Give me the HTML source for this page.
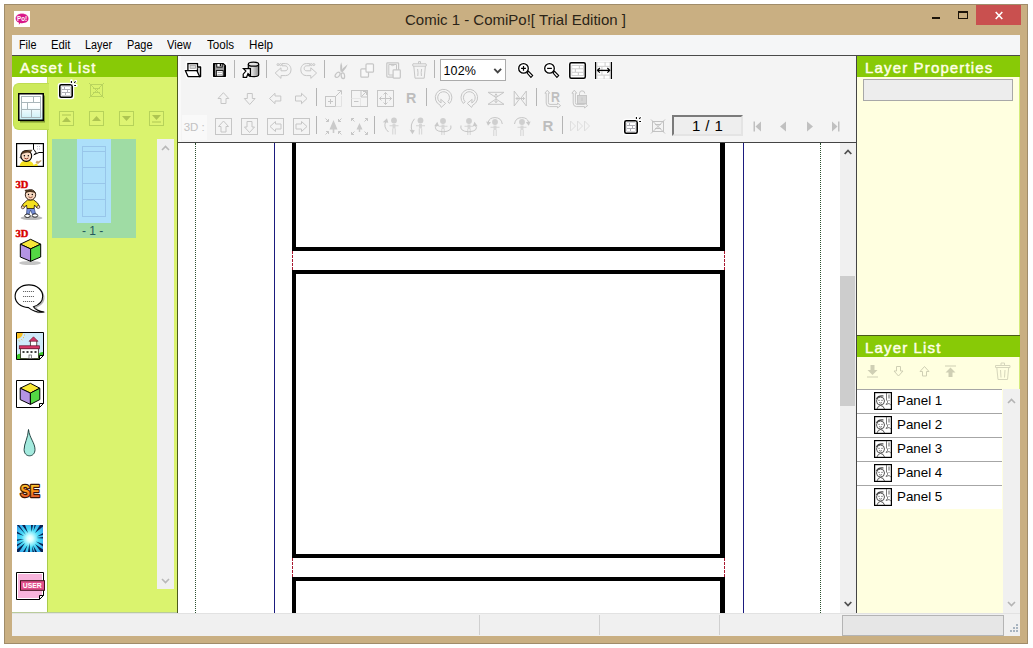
<!DOCTYPE html>
<html lang="en">
<head>
<meta charset="utf-8">
<title>Comic 1 - ComiPo![ Trial Edition ]</title>
<style>
html,body{margin:0;padding:0;background:#fff;}
body{width:1033px;height:648px;overflow:hidden;position:relative;font-family:"Liberation Sans",sans-serif;}
.a{position:absolute;}
.t{position:absolute;white-space:nowrap;line-height:1;transform-origin:0 0;}
svg{position:absolute;overflow:visible;}
#win{left:4px;top:4px;width:1024px;height:640px;background:#c9af82;box-shadow:inset 0 0 0 1px #a08c6a;}
#menubar{left:12px;top:35px;width:1008px;height:20px;background:#f5f6f7;}
.mi{font-size:12px;top:39px;color:#000;}
#topline{left:12px;top:55px;width:1008px;height:1px;background:#4a4a4a;}
.hdr{background:#88ca06;color:#fff;}
.hdrt{font-weight:normal;font-size:15px;color:#ffffe8;-webkit-text-stroke:0.45px #ffffe8;letter-spacing:1.15px;}
#left{left:12px;top:56px;width:165px;height:557px;background:#daf36e;}
#leftcol{left:12px;top:77px;width:35px;height:536px;background:#fff;}
#toolbar{left:178px;top:56px;width:678px;height:86px;background:#f4f4f4;}
#canvas{left:178px;top:143px;width:678px;height:470px;background:#fff;overflow:hidden;}
#right{left:857px;top:56px;width:163px;height:557px;background:#ffffe0;}
#status{left:12px;top:613px;width:1008px;height:23px;background:#f0f0f0;}
.vsep{width:1px;background:#b4b4b4;}
.lay{font-size:13.33px;color:#000;}
.dis{stroke:#c6c6c6;fill:none;stroke-width:1;}
</style>
</head>
<body>
<div id="win" class="a"></div>

<!-- title bar -->
<div class="a" style="left:14px;top:11px;width:16px;height:16px;background:#fffffb;"></div>
<svg style="left:14px;top:11px;" width="16" height="16" viewBox="0 0 16 16">
 <defs><radialGradient id="gpo" cx="0.5" cy="0.5" r="0.6"><stop offset="0.7" stop-color="#d81888"/><stop offset="1" stop-color="#f080c0"/></radialGradient></defs>
 <path d="M8 2.600 C12 2.600 14.600 4.800 14.600 7.600 C14.600 10.500 12 12.300 8 12.300 C7.300 12.300 6.800 12.200 6.300 12.100 L4.800 14 L5 11.700 C2.800 11 1.500 9.500 1.500 7.600 C1.500 4.800 4 2.600 8 2.600 Z" fill="url(#gpo)"/>
 <text x="3" y="10.200" font-family="Liberation Sans,sans-serif" font-weight="bold" font-size="7.500" fill="#fff" textLength="10" lengthAdjust="spacingAndGlyphs">Po!</text>
</svg>

<div class="t" id="title" style="left:405px;top:12px;font-size:15px;color:#2b2417;">Comic 1 - ComiPo![ Trial Edition ]</div>
<div class="a" style="left:932px;top:17px;width:8px;height:2px;background:#1c140a;"></div>
<div class="a" style="left:958px;top:11px;width:8px;height:5px;border:1px solid #1c140a;border-top-width:2px;"></div>
<div class="a" style="left:976px;top:5px;width:45px;height:20px;background:#c9504f;"></div>
<svg style="left:995px;top:12px;" width="8" height="7" viewBox="0 0 8 7"><path d="M0.7 0 L7.3 7 M7.3 0 L0.7 7" stroke="#fff" stroke-width="1.6" fill="none"/></svg>

<!-- menu bar -->
<div id="menubar" class="a"></div>
<div class="t mi" style="left:19.3px;transform:scaleX(0.9);">File</div>
<div class="t mi" style="left:51.2px;transform:scaleX(0.94);">Edit</div>
<div class="t mi" style="left:85.4px;transform:scaleX(0.9);">Layer</div>
<div class="t mi" style="left:127.2px;transform:scaleX(0.91);">Page</div>
<div class="t mi" style="left:167.3px;transform:scaleX(0.93);">View</div>
<div class="t mi" style="left:206.6px;transform:scaleX(0.97);">Tools</div>
<div class="t mi" style="left:249.3px;transform:scaleX(0.97);">Help</div>
<div id="topline" class="a"></div>

<!-- LEFT PANEL -->
<div id="left" class="a"></div>
<div class="a hdr" style="left:12px;top:56px;width:165px;height:21px;"></div>
<div class="t hdrt" id="h_asset" style="left:20px;top:60px;">Asset List</div>
<div id="leftcol" class="a"></div>

<div class="a" style="left:47px;top:77px;width:1px;height:6px;background:#c4e05e;"></div>
<div class="a" style="left:47px;top:130px;width:1px;height:483px;background:#a9cb4c;"></div>
<div class="a" style="left:13px;top:83px;width:35px;height:45px;background:#cdea5c;border:1px solid #bfdc52;border-right:0;border-radius:6px 0 0 6px;"></div>
<!-- thumbnail list -->
<div class="a" style="left:52px;top:139px;width:84px;height:99px;background:#9fdca4;"></div>
<div class="a" style="left:77px;top:139px;width:34px;height:84px;background:#ade0fa;"></div>
<div class="t" id="pg1" style="left:82px;top:225px;font-size:12px;color:#24595c;">- 1 -</div>
<div class="a" style="left:157px;top:139px;width:17px;height:450px;background:#f0f0f0;"></div>
<svg style="left:0;top:0;" width="1033" height="648" viewBox="0 0 1033 648">
 <!-- thumb frames -->
 <g fill="none" stroke="#98c6ea" stroke-width="1">
  <rect x="82.5" y="146.5" width="23" height="5"/>
  <rect x="82.5" y="151.5" width="23" height="16"/>
  <rect x="82.5" y="167.5" width="23" height="16"/>
  <rect x="82.5" y="183.5" width="23" height="16"/>
  <rect x="82.5" y="199.5" width="23" height="17"/>
 </g>
 <!-- list scrollbar arrows -->
 <path d="M162 150 L165.5 146.5 L169 150" stroke="#b8b8b8" stroke-width="1.6" fill="none"/>
 <path d="M162 579 L165.5 582.5 L169 579" stroke="#b8b8b8" stroke-width="1.6" fill="none"/>
 <!-- new page icon -->
 <g id="newpg">
  <rect x="57.800" y="82.800" width="16.400" height="16.400" rx="2.500" fill="#fff"/>
  <rect x="59.800" y="84.800" width="12.400" height="12.400" rx="1.500" fill="#fff" stroke="#000" stroke-width="1.600"/>
  <rect x="61.500" y="86.500" width="9" height="9" fill="#b0b0b8"/>
  <g fill="#fff"><rect x="62" y="87" width="2" height="2"/><rect x="65" y="87" width="5" height="2"/><rect x="62" y="90" width="5" height="2"/><rect x="68" y="90" width="2" height="2"/><rect x="62" y="93" width="3" height="2"/><rect x="66" y="93" width="4" height="2"/></g>
  <path d="M71.400 83 V80.600 M74 83 L75.800 81.200 M74 85.500 H76.300" stroke="#fff" stroke-width="2.800" stroke-linecap="round"/>
  <path d="M71.400 83 V81 M74.200 82.800 L75.600 81.400 M74.200 85.500 H76" stroke="#000" stroke-width="1.100"/>
 </g>
 <!-- delete page icon (disabled) -->
 <g stroke="#b9d45e" stroke-width="1" fill="none">
  <rect x="90.5" y="84.5" width="12" height="12"/>
  <path d="M89 83 L104 98 M104 83 L89 98"/>
  <path d="M93 88.5 H100 M93 92.5 H100"/>
 </g>
 <!-- arrow buttons -->
 <g stroke="#b6d25a" stroke-width="1" fill="#def472">
  <rect x="59.5" y="111.500" width="14" height="14"/>
  <rect x="89.5" y="111.500" width="14" height="14"/>
  <rect x="119.5" y="111.500" width="14" height="14"/>
  <rect x="149.5" y="111.500" width="14" height="14"/>
 </g>
 <g fill="#aec552">
  <path d="M62 122 L66.500 117 L71 122 Z"/><rect x="62" y="114.500" width="9" height="1"/>
  <path d="M92 121 L96.500 116 L101 121 Z"/>
  <path d="M122 116 L126.500 121 L131 116 Z"/>
  <path d="M152 115 L156.500 120 L161 115 Z"/><rect x="152" y="121.500" width="9" height="1"/>
 </g>
</svg>

<svg style="left:0;top:0;" width="1033" height="648" viewBox="0 0 1033 648">
 <defs>
  <linearGradient id="gcy" x1="0" y1="0" x2="0" y2="1"><stop offset="0.45" stop-color="#fff"/><stop offset="1" stop-color="#c4eef6"/></linearGradient>
  <linearGradient id="gse" x1="0" y1="0" x2="0" y2="1"><stop offset="0" stop-color="#ffe040"/><stop offset="0.5" stop-color="#ff9a18"/><stop offset="1" stop-color="#e04838"/></linearGradient>
  <radialGradient id="gbu" cx="0.5" cy="0.5" r="0.75"><stop offset="0" stop-color="#fff"/><stop offset="0.15" stop-color="#d8ffff"/><stop offset="0.45" stop-color="#48dcf8"/><stop offset="1" stop-color="#2a8ee8"/></radialGradient>
  <clipPath id="cbu"><rect x="17" y="525" width="26" height="27"/></clipPath>
 </defs>
 <!-- tab icon: panel layout -->
 <rect x="20" y="95.500" width="25" height="27" fill="#7d962e"/>
 <rect x="18.750" y="93.750" width="24.500" height="26.500" fill="url(#gcy)" stroke="#000" stroke-width="1.500"/>
 <g stroke="#a9b6ba" stroke-width="1" fill="none">
  <rect x="21.500" y="96.500" width="19" height="21"/>
  <path d="M21.500 102.500 H40.500 M21.500 109.500 H40.500 M33.500 96.500 V102.500 M27.500 102.500 V109.500 M31.500 109.500 V117.500"/>
 </g>
 <!-- character frame icon -->
 <rect x="16.600" y="143.600" width="26.800" height="22.800" fill="#fff" stroke="#000" stroke-width="1.200"/>
 <path d="M19.500 166 Q20.500 161.500 24 161 L29 161 Q33 161.500 34 166 Z" fill="#f4e020"/>
 <path d="M33 166 Q35 163 37 163.500 L38 166 Z" fill="#f4e020"/>
 <path d="M35.500 162.500 L37 160.500 L38 161.500 L41 160 L41.500 161 L38 164 Z" fill="#c8a070"/>
 <circle cx="26.300" cy="156" r="5.400" fill="#fadcc4" stroke="#000" stroke-width="1.100"/>
 <path d="M21.300 154.300 Q22.300 150.800 26.500 150.500 Q29.500 150 32.200 150.200 Q30.800 151.200 30.300 152.600 Q27 151.600 24 153 Q22.500 153.600 21.300 154.300 Z" fill="#5a3c20" stroke="#2a1808" stroke-width="0.500"/>
 <circle cx="24.400" cy="155.700" r="0.750" fill="#000"/><circle cx="28.300" cy="155.700" r="0.750" fill="#000"/>
 <path d="M24.300 158 Q26.300 159.800 28.400 158" stroke="#802010" stroke-width="0.900" fill="none"/>
 <path d="M20.600 156.500 q-0.800 0.800 0 1.800" stroke="#000" stroke-width="0.800" fill="none"/>
 <path d="M33.500 144 V149.500 Q35.500 150.500 35.300 152 L36.300 152.600 L33.800 154.800 L39 152.500 H43.400" stroke="#000" stroke-width="1" fill="#fff"/>
 <path d="M37.500 146 V147 M39.500 146 V147 M37.500 148.500 V149.500 M39.500 148.500 V149.500" stroke="#b8b8c8" stroke-width="0.900"/>
 <!-- 3D character -->
 <text x="15.500" y="187.800" font-family="Liberation Serif,serif" font-weight="bold" font-size="10.500" fill="#d80000" stroke="#d80000" stroke-width="0.400">3D</text>
 <ellipse cx="31.500" cy="218" rx="11" ry="2" fill="#b8b8b8"/>
 <path d="M27 208 L26.500 214 L29 214.500 L30.500 210 L32.500 214.500 L35.500 213.500 L34 207.500 Z" fill="#7890d8" stroke="#203060" stroke-width="0.600"/>
 <ellipse cx="27.500" cy="215.800" rx="2.800" ry="1.700" fill="#fff" stroke="#000" stroke-width="0.800"/>
 <ellipse cx="35" cy="215.500" rx="2.800" ry="1.700" fill="#fff" stroke="#000" stroke-width="0.800"/>
 <path d="M27.500 200 L23 204 L21.500 207 L24 208 L26.500 205 L27 208.500 L34 208.500 L34.500 205 L37 208 L39.500 206.500 L37.500 203 L33.500 199.800 Z" fill="#f4e020" stroke="#201008" stroke-width="0.800"/>
 <circle cx="22.800" cy="207.300" r="1.500" fill="#f8d8c0" stroke="#201008" stroke-width="0.600"/>
 <circle cx="38.300" cy="207" r="1.500" fill="#f8d8c0" stroke="#201008" stroke-width="0.600"/>
 <circle cx="30.500" cy="194.800" r="5.200" fill="#f8d8c0" stroke="#201008" stroke-width="0.900"/>
 <path d="M24.500 190 Q27 188.800 30 190 Q34 189.500 36 193.500 Q33 191.500 29 192 Q27 192 25.500 193.500 Q26 191 24.500 190 Z" fill="#4a3420"/>
 <circle cx="28.500" cy="194.500" r="0.700" fill="#000"/><circle cx="32.300" cy="194.500" r="0.700" fill="#000"/>
 <path d="M28.500 196.800 Q30.500 198.500 32.500 196.800" stroke="#702010" stroke-width="0.800" fill="none"/>
 <!-- 3D cube -->
 <text x="15.500" y="236.800" font-family="Liberation Serif,serif" font-weight="bold" font-size="10.500" fill="#d80000" stroke="#d80000" stroke-width="0.400">3D</text>
 <ellipse cx="30" cy="263" rx="11" ry="2" fill="#c4c4c4"/>
 <g stroke="#000" stroke-width="1" stroke-linejoin="round">
  <path d="M30.600 239.300 L40.700 244.200 L30.600 248.900 L20.300 244.200 Z" fill="#f8e838"/>
  <path d="M20.300 244.200 L30.600 248.900 V261.300 L20.300 257 Z" fill="#b494e4"/>
  <path d="M40.700 244.200 L30.600 248.900 V261.300 L40.700 257 Z" fill="#54d844"/>
 </g>
 <!-- speech bubble -->
 <path d="M38 287.500 C43 290.500 45.300 295 44.300 300 C43.500 303.500 40.500 306 36.500 307.800 C38.500 310.500 42 312.300 46 312.800 L38 313.300 C35 312.500 33 311 31.500 309 L34 307 C39 305 42.500 301.500 42.700 296.300 C42.700 292.500 41 289.500 38 287.500 Z" fill="#a8a8a8" opacity="0.850"/>
 <path d="M28.900 284.900 C37 284.900 42.700 290 42.700 296.300 C42.700 301 39 305 33.500 306.800 C35.500 310 39 311.500 44.300 312 C37 312.800 32 310.500 28.500 307.600 C20.500 307.300 15.100 302.500 15.100 296.300 C15.100 290 20.800 284.900 28.900 284.900 Z" fill="#fff" stroke="#000" stroke-width="1.100"/>
 <path d="M23 291.500 h11 M23 296.500 h11 M23 301.500 h12" stroke="#555" stroke-width="0.900" stroke-dasharray="1.200 0.800"/>
 <!-- background picture -->
 <path d="M16.500 332.500 H43.500 V355.500 L39.500 359.500 H16.500 Z" fill="#cfeafa" stroke="#000" stroke-width="1"/>
 <path d="M17 333 H22.800 A5.800 5.800 0 0 1 17 338.800 Z" fill="#f8c020"/>
 <path d="M24 335 l0.800 0 M23.200 337.500 l0.800 0.300 M21.500 339.500 l0.700 0.500 M19 340.500 l0.500 0.800" stroke="#e8b020" stroke-width="1"/>
 <path d="M17 359 V355 Q20 352.500 23 355.500 Q25.500 356 27 359 Z" fill="#3cc82c"/>
 <path d="M34 359 Q35 355 38 354.500 Q40 351.500 43 352 V355.500 L39.500 359 Z" fill="#3cc82c"/>
 <rect x="30.300" y="340.500" width="6.500" height="6" fill="#fff" stroke="#201008" stroke-width="0.700"/>
 <path d="M29 341.300 L33.500 336.800 L38 341.300 Z" fill="#d03868" stroke="#601028" stroke-width="0.600"/>
 <rect x="20.500" y="348.500" width="18" height="10" fill="#fff" stroke="#201008" stroke-width="0.700"/>
 <rect x="19.300" y="345.800" width="20.200" height="3" fill="#d83868" stroke="#601028" stroke-width="0.700"/>
 <path d="M22.500 352 h2 M26.500 352 h2 M30.500 352 h2 M34.500 352 h2" stroke="#404040" stroke-width="1.800"/>
 <rect x="29" y="355" width="2.500" height="3.500" fill="#fff" stroke="#404040" stroke-width="0.600"/>
 <path d="M39.500 359.500 V355.500 H43.500 Z" fill="#fff" stroke="#000" stroke-width="1" stroke-linejoin="round"/>
 <!-- cube paper -->
 <path d="M16.500 380.500 H43.500 V403.500 L39.500 407.500 H16.500 Z" fill="#fff" stroke="#000" stroke-width="1"/>
 <path d="M39.500 407.500 V403.500 H43.500 Z" fill="#fff" stroke="#000" stroke-width="1" stroke-linejoin="round"/>
 <g stroke="#000" stroke-width="1" stroke-linejoin="round">
  <path d="M30.400 383.300 L39.800 388.200 L30.400 393.100 L20.200 388.200 Z" fill="#f8e838"/>
  <path d="M20.200 388.200 L30.400 393.100 V404.400 L20.200 399.600 Z" fill="#b494e4"/>
  <path d="M39.800 388.200 L30.400 393.100 V404.400 L39.800 399.600 Z" fill="#54d844"/>
 </g>
 <!-- water drop -->
 <path d="M28.500 429.500 C29.500 438 35 443 35 449.500 C35 453.500 32.500 455.800 29.500 455.800 C26.500 455.800 24.100 453.500 24.100 449.500 C24.100 443.500 28 438 28.500 429.500 Z" fill="#a4eade" stroke="#143434" stroke-width="0.900"/>
 <!-- SE -->
 <text x="20.200" y="496.600" font-family="Liberation Sans,sans-serif" font-weight="bold" font-size="16.300" textLength="19.600" lengthAdjust="spacingAndGlyphs" fill="url(#gse)" stroke="#3c1404" stroke-width="2.400" paint-order="stroke" stroke-linejoin="round">SE</text>
 <!-- burst -->
 <rect x="17" y="525" width="26" height="27" fill="url(#gbu)"/>
 <g clip-path="url(#cbu)" fill="#082050">
  <path d="M17 525 L19 525 L26 535 Z"/><path d="M22 525 L25 525 L28 533 Z"/><path d="M31 525 L33 525 L31.500 532 Z"/><path d="M34.500 525 L36 525 L33.500 531 Z"/><path d="M40 525 L43 525 L43 526.500 L35 533 Z"/>
  <path d="M43 533 L43 535 L37 536.500 Z"/><path d="M43 537 L43 538.500 L36.500 538 Z"/><path d="M43 544 L43 546.500 L36 541.500 Z"/><path d="M43 549.500 L43 552 L41 552 L35 544 Z"/>
  <path d="M35 552 L37 552 L33 545 Z"/><path d="M32.500 552 L34 552 L32 546 Z"/><path d="M28 552 L30 552 L29.500 543 Z"/><path d="M23 552 L25 552 L27.500 545 Z"/><path d="M17 552 L17 549.500 L25 543 L19 552 Z"/>
  <path d="M17 544.500 L17 546.500 L24 541 Z"/><path d="M17 539.500 L17 541 L24 539 Z"/><path d="M17 531.500 L17 533.500 L24 536 Z"/>
 </g>
 <!-- USER -->
 <path d="M16.500 572.500 H43.500 V595.500 L39.500 599.500 H16.500 Z" fill="#fff" stroke="#000" stroke-width="1"/>
 <path d="M18 574 H42 V595 L39 598 H18 Z" fill="#f8b4dc"/>
 <path d="M39.500 599.500 V595.500 H43.500 Z" fill="#fff" stroke="#000" stroke-width="1" stroke-linejoin="round"/>
 <rect x="20.500" y="580.700" width="24" height="9.600" fill="#e0508c" stroke="#40101c" stroke-width="1"/>
 <text x="22.800" y="588.300" font-family="Liberation Sans,sans-serif" font-weight="bold" font-size="7" textLength="19" lengthAdjust="spacingAndGlyphs" fill="#fff">USER</text>
</svg>



<div class="a" style="left:12px;top:612px;width:165px;height:1px;background:#b9cc9a;"></div>
<!-- TOOLBAR -->
<div id="toolbar" class="a"></div>

<div class="a vsep" style="left:234px;top:60px;height:18px;"></div>
<div class="a vsep" style="left:266px;top:60px;height:18px;"></div>
<div class="a vsep" style="left:324px;top:60px;height:18px;"></div>
<div class="a vsep" style="left:434px;top:60px;height:18px;"></div>
<div class="a vsep" style="left:316px;top:88px;height:18px;"></div>
<div class="a vsep" style="left:426px;top:88px;height:18px;"></div>
<div class="a vsep" style="left:536px;top:88px;height:18px;"></div>
<div class="a vsep" style="left:316px;top:116px;height:18px;"></div>
<div class="a vsep" style="left:374px;top:116px;height:18px;"></div>
<div class="a vsep" style="left:562px;top:116px;height:18px;"></div>
<!-- zoom combo -->
<div class="a" style="left:440px;top:59px;width:64px;height:20px;background:#fff;border:1px solid #ababab;"></div>
<div class="t" id="zoomtxt" style="left:443.5px;top:64.8px;font-size:12.5px;color:#000;letter-spacing:0.15px;">102%</div>
<!-- 3D label -->
<div class="a" style="left:178px;top:56px;width:3px;height:86px;background:#f9f9f9;"></div>
<div class="a" style="left:182px;top:115px;width:25px;height:25px;background:#f9f9f9;"></div>
<div class="t" id="lbl3d" style="left:183.7px;top:122px;font-size:11.5px;color:#c2c2c2;">3D :</div>
<!-- page box -->
<div class="a" style="left:672px;top:115px;width:67px;height:17px;background:#eeeeee;border:2px solid;border-color:#7a7a7a #e4e4e4 #e4e4e4 #7a7a7a;"></div>
<div class="t" id="pgtxt" style="left:692px;top:118px;font-size:15px;color:#000;letter-spacing:0.4px;">1 / 1</div>
<div class="t" style="left:405.5px;top:90.3px;font-size:15px;font-weight:bold;color:#bdbdbd;transform:scaleX(0.95);">R</div>
<div class="t" style="left:542.4px;top:118.4px;font-size:15px;font-weight:bold;color:#bdbdbd;">R</div>
<svg style="left:0;top:0;" width="1033" height="648" viewBox="0 0 1033 648">
 <defs>
  <linearGradient id="gcyl" x1="0" y1="0" x2="1" y2="0"><stop offset="0" stop-color="#b8b8b8"/><stop offset="0.4" stop-color="#dcdcdc"/><stop offset="1" stop-color="#8c8c8c"/></linearGradient>
  <pattern id="brick" x="0" y="0" width="8" height="8" patternUnits="userSpaceOnUse"><rect width="8" height="8" fill="#d9d9d9"/><rect x="0.5" y="0.500" width="4" height="3" fill="#fff"/><rect x="5.500" y="0.500" width="2.500" height="3" fill="#fff"/><rect x="0" y="4.500" width="2" height="3" fill="#fff"/><rect x="3" y="4.500" width="4.500" height="3" fill="#fff"/></pattern>
 </defs>
 <!-- ROW 1 -->
 <g id="ic_open">
  <path d="M186.300 62 H198.600 V66 H201.500 V77.800 H187 L184.200 70 H186.300 Z" fill="#fff" stroke="#fff" stroke-width="1.500" stroke-linejoin="round"/>
  <rect x="187.900" y="63.600" width="9.600" height="8" fill="#fff" stroke="#000" stroke-width="1.300"/>
  <rect x="190" y="65.300" width="5.600" height="3" fill="#d8d8d8" stroke="#999" stroke-width="0.700"/>
  <path d="M197.500 67 H200.600 V76.500 H199" fill="#d0d0d0" stroke="#000" stroke-width="1.300" stroke-linejoin="round"/>
  <path d="M185.300 70.600 H196.800 L199.600 76.600 H188 Z" fill="#fff" stroke="#000" stroke-width="1.300" stroke-linejoin="round"/>
 </g>
 <g id="ic_save">
  <rect x="212" y="62" width="15" height="16" fill="#fff"/>
  <path d="M213.600 63.600 H223.300 L225.400 65.700 V76.300 H213.600 Z" fill="#9c9c9c" stroke="#000" stroke-width="1.300" stroke-linejoin="round"/>
  <rect x="213.600" y="64" width="1.300" height="12" fill="#000"/><rect x="224.100" y="66" width="1.300" height="10" fill="#000"/>
  <rect x="216.800" y="63.500" width="5.400" height="3.600" fill="#fff" stroke="#000" stroke-width="0.900"/>
  <rect x="219.800" y="64" width="1.400" height="2.300" fill="#000"/>
  <rect x="216.300" y="70.600" width="6.900" height="5.600" fill="#fff" stroke="#000" stroke-width="0.900"/>
  <path d="M217.500 72.500 H222 M217.500 74.500 H222" stroke="#aaa" stroke-width="0.800"/>
 </g>
 <g id="ic_export">
  <path d="M247.300 63 Q253.500 60 259.800 63 V76.500 Q253.500 79 250 77 L247 79 H242 V67.500 H247.300 Z" fill="#fff"/>
  <path d="M248.300 64.200 V74.800 A5.200 1.900 0 0 0 258.700 74.800 V64.200" fill="url(#gcyl)" stroke="#000" stroke-width="1.200"/>
  <ellipse cx="253.500" cy="64.200" rx="5.200" ry="2" fill="#e4e4e4" stroke="#000" stroke-width="1.200"/>
  <path d="M250.400 68.600 H243.400 L245.900 71.100 L243.200 74.200 V77.300 H246.600 L248 73.600 L250.400 75.900 Z" fill="#fff" stroke="#000" stroke-width="1.200" stroke-linejoin="miter"/>
 </g>
 <g class="dis">
  <!-- undo -->
  <circle cx="278" cy="64.600" r="1"/><circle cx="280.500" cy="64.600" r="1"/>
  <path d="M282 63.600 H285.500 C289 63.600 291 66.500 291 69.800 C291 73 289 75.600 285.500 75.600 H281 V78.400 L275.200 73 L281 67.800 V70.800 H285 C286.800 70.800 287.600 69.800 287.600 68.400 C287.600 67 286.800 65.800 285 65.800 H282 Z"/>
  <!-- redo -->
  <g transform="translate(591.800,0) scale(-1,1)">
  <circle cx="278" cy="64.600" r="1"/><circle cx="280.500" cy="64.600" r="1"/>
  <path d="M282 63.600 H285.500 C289 63.600 291 66.500 291 69.800 C291 73 289 75.600 285.500 75.600 H281 V78.400 L275.200 73 L281 67.800 V70.800 H285 C286.800 70.800 287.600 69.800 287.600 68.400 C287.600 67 286.800 65.800 285 65.800 H282 Z"/>
  </g>
  <!-- scissors -->
  <path d="M341.200 62.300 Q339.300 67.500 340.800 72 L342.300 71.500 Q342.800 66 341.200 62.300 Z M347.700 64.300 Q343 67.500 341 71.300 L342.500 72.300 Q346.500 68.500 347.700 64.300 Z" fill="#c4c4c4" stroke="none"/>
  <ellipse cx="337.600" cy="74.800" rx="1.900" ry="3" transform="rotate(42 337.600 74.800)" stroke-width="1.200"/>
  <ellipse cx="342.900" cy="75.700" rx="1.700" ry="2.900" transform="rotate(-8 342.900 75.700)" stroke-width="1.200"/>
  <!-- copy -->
  <rect x="360.800" y="68.800" width="7.700" height="8.400" rx="1" stroke-width="1.200" fill="#f8f8f8"/>
  <rect x="366" y="63.800" width="7.500" height="8.400" rx="1" stroke-width="1.200" fill="#f8f8f8"/>
  <!-- paste -->
  <rect x="386.800" y="62.800" width="11.800" height="14.300" rx="0.800" stroke-width="1.200"/>
  <path d="M388.800 64.500 H396.500 V75 H388.800 Z M390.300 64.500 Q392.500 66.800 395 64.500"/>
  <rect x="393.100" y="69.800" width="7.200" height="8.300" rx="0.800" stroke-width="1.200" fill="#f6f6f6"/>
  <!-- trash -->
  <path d="M413 63.800 H426 Q426.800 65 426 66.200 H413 Q412.200 65 413 63.800 Z M418.600 63.800 V61.600 H420.500 V63.800 M413.800 66.200 L415 78.200 H424.200 L425.400 66.200 M417.600 69 Q418.300 72.500 417.800 76 M421.600 69 Q420.900 72.500 421.400 76"/>
 </g>
 <path d="M494.300 68.800 L497.700 72.300 L501.100 68.800" stroke="#444" stroke-width="1.900" fill="none"/>
 <!-- zoom in/out -->
 <g id="ic_zoomin" stroke="#000" fill="#fff">
  <circle cx="523.500" cy="68.400" r="6" stroke="#fff" stroke-width="1"/>
  <path d="M526.900 72.900 L528.600 71.300 L532.700 75.600 L530.900 77.400 Z" stroke="#fff" stroke-width="2.500"/>
  <path d="M526.900 72.900 L528.600 71.300 L532.700 75.600 L530.900 77.400 Z" stroke-width="1.100"/>
  <circle cx="523.500" cy="68.400" r="4.800" stroke-width="1.300"/>
  <path d="M521.100 68.400 H525.900 M523.500 66 V70.800" stroke-width="1.200" fill="none"/>
 </g>
 <g id="ic_zoomout" stroke="#000" fill="#fff">
  <circle cx="549.500" cy="68.400" r="6" stroke="#fff" stroke-width="1"/>
  <path d="M552.900 72.900 L554.600 71.300 L558.700 75.600 L556.900 77.400 Z" stroke="#fff" stroke-width="2.500"/>
  <path d="M552.900 72.900 L554.600 71.300 L558.700 75.600 L556.900 77.400 Z" stroke-width="1.100"/>
  <circle cx="549.500" cy="68.400" r="4.800" stroke-width="1.300"/>
  <path d="M547.100 68.400 H551.900" stroke-width="1.200" fill="none"/>
 </g>
 <!-- fit page -->
 <rect x="568.300" y="61.300" width="18.400" height="18.400" rx="2" fill="#fff"/>
 <rect x="569.800" y="62.800" width="15.500" height="15.400" rx="1.500" fill="#fff" stroke="#000" stroke-width="1.500"/>
 <g>
  <rect x="571.500" y="65" width="12.300" height="11" fill="#cfcfcf"/>
  <g fill="#fff"><rect x="572.200" y="66" width="6.600" height="2.300"/><rect x="580" y="66" width="3" height="2.300"/><rect x="572.200" y="69.300" width="2.600" height="2.500"/><rect x="576" y="69.300" width="7" height="2.500"/><rect x="572.200" y="72.800" width="5.600" height="2.300"/><rect x="579" y="72.800" width="4" height="2.300"/></g>
 </g>
 <!-- fit width -->
 <rect x="594.300" y="61.300" width="18.400" height="18.400" fill="#fff"/>
 <rect x="597" y="62" width="13" height="17" fill="#d6d6d6"/>
 <g fill="#fff"><rect x="597.500" y="62.500" width="7" height="3.300"/><rect x="605.700" y="62.500" width="3.800" height="3.300"/><rect x="597.500" y="67" width="3.800" height="3.300"/><rect x="602.500" y="67" width="7" height="3.300"/><rect x="597.500" y="71.500" width="3.800" height="3"/><rect x="602.500" y="71.500" width="7" height="3"/><rect x="597.500" y="75.700" width="6" height="3"/><rect x="604.700" y="75.700" width="4.800" height="3"/></g>
 <path d="M595.600 62 V79 M611.400 62 V79" stroke="#000" stroke-width="1.300"/>
 <path d="M597.600 70.300 H609.600 M599.800 68 L597.500 70.300 L599.800 72.600 M607.400 68 L609.700 70.300 L607.400 72.600" stroke="#000" stroke-width="1.200" fill="none"/>
 <!-- ROW 2 -->
 <g class="dis">
  <path d="M223.400 92.700 L228.800 98.500 H226 V103.500 H221 V98.500 H218 Z"/>
  <path d="M249.700 104.500 L255.100 98.500 H252.300 V93.500 H247.300 V98.500 H244.300 Z"/>
  <path d="M269.500 98.500 L275 93.300 V96 H280.800 V101 H275 V103.700 Z"/>
  <path d="M307 98.500 L301.500 93.300 V96 H295.500 V101 H301.500 V103.700 Z"/>
  <!-- enlarge -->
  <rect x="325.500" y="96.500" width="10" height="10"/><path d="M328 101.500 H333 M330.500 99 V104"/>
  <path d="M335.500 96.500 L341 91 M337.500 90.500 H341.500 V94.500"/><path d="M335.500 106.500 H341.500 V96" stroke="#e2e2e2"/>
  <!-- shrink -->
  <rect x="351.500" y="90.500" width="16" height="16"/><path d="M354 101.500 H358.500"/><path d="M361 90.500 V97 H367.500 M361.500 96.500 L366 92 M363 91.500 H366.500 V95"/>
  <path d="M351.500 98.500 H361 M360.500 98 V106" stroke="#e6e6e6"/>
  <!-- move -->
  <rect x="377.500" y="90.500" width="16" height="16"/>
  <path d="M385.500 92.500 V104.500 M379.500 98.500 H391.500 M383.500 94.500 L385.500 92.500 L387.500 94.500 M383.500 102.500 L385.500 104.500 L387.500 102.500 M381.500 96.500 L379.500 98.500 L381.500 100.500 M389.500 96.500 L391.500 98.500 L389.500 100.500"/>
  <!-- rotate L -->
  <path id="rotl" d="M449.470 103.470 A8.300 8.300 0 1 0 440.090 105.120 L441.300 107.400 L445.600 103.400 L440.800 99.300 L441.110 102.950 A5.900 5.900 0 1 1 447.770 101.770 Z"/>
  <!-- rotate R -->
  <use href="#rotl" transform="translate(912.900,0) scale(-1,1)"/>
  <!-- flip V -->
  <path d="M488 92.300 H504 L496 97.500 Z M488 104.300 H504 L496 99 Z"/><path d="M496 93.500 V103 M494.500 95.500 L496 94 L497.500 95.500 M494.500 101 L496 102.500 L497.500 101"/>
  <!-- flip H -->
  <path d="M514.200 91 V106 L519.800 98.500 Z M526.300 91 V106 L520.700 98.500 Z"/><path d="M516 98.500 H524.500 M517.500 97 L516 98.500 L517.500 100 M523 97 L524.500 98.500 L523 100"/>
  <!-- icon A -->
  <path id="dblarr" d="M547.300 90.200 L549.700 93.200 H548.400 V102.600 Q548.400 104.400 550 104.400 H557.500 V103 L560.600 105.600 L557.500 108 V106.600 H549.500 Q546.200 106.600 546.200 103 V93.200 H544.900 Z"/>
  <!-- icon B -->
  <use href="#dblarr" x="27"/>
  <rect x="577.500" y="95.500" width="9" height="8" fill="#d6d6d6"/><path d="M579.500 95.500 V93.500 Q579.500 90.800 582 90.800 Q584.800 90.800 584.800 93.500"/><path d="M582 97.500 V101"/>
 </g>
 <text x="551" y="101.600" font-family="Liberation Sans,sans-serif" font-weight="bold" font-size="14.500" fill="#bfbfbf" textLength="9" lengthAdjust="spacingAndGlyphs">R</text>
 <!-- ROW 3 -->
 <g class="dis">
  <rect x="215.500" y="118.500" width="16" height="16"/><rect x="241.500" y="118.500" width="16" height="16"/><rect x="267.500" y="118.500" width="16" height="16"/><rect x="293.500" y="118.500" width="16" height="16"/>
  <path d="M223.500 121 L228.500 126.500 H226 V132 H221 V126.500 H218.500 Z"/>
  <path d="M249.500 132.500 L254.500 127 H252 V121.500 H247 V127 H244.500 Z"/>
  <path d="M270 126.500 L275.500 121.500 V124 H281 V129 H275.500 V131.500 Z"/>
  <path d="M307 126.500 L301.500 121.500 V124 H296 V129 H301.500 V131.500 Z"/>
  <!-- tree in -->
  <path d="M333.500 120 L337.500 129.500 H334.300 V133 H332.700 V129.500 H329.500 Z" fill="#cacaca" stroke="none"/>
  <path d="M325.500 118.500 L328.500 121.500 M328.500 119 V121.500 H326 M341.500 118.500 L338.500 121.500 M338.500 119 V121.500 H341 M325.500 134.500 L328.500 131.500 M328.500 134 V131.500 H326 M341.500 134.500 L338.500 131.500 M338.500 134 V131.500 H341"/>
  <!-- tree out -->
  <path d="M359.500 123 L362.500 129.500 H360.200 V132 H358.800 V129.500 H356.500 Z" fill="#cacaca" stroke="none"/>
  <path d="M351.500 118.500 L354.500 121.500 M351.500 121 V118.500 H354 M367.500 118.500 L364.500 121.500 M367.500 121 V118.500 H365 M351.500 134.500 L354.500 131.500 M351.500 132 V134.500 H354 M367.500 134.500 L364.500 131.500 M367.500 132 V134.500 H365"/>
 </g>
 <!-- skeleton figures -->
 <g id="skel" fill="#cfcfcf" stroke="none">
  <g id="sk1"><circle cx="394" cy="120.500" r="2.900"/><rect x="392.500" y="124" width="3" height="4.500" fill="#d8d8d8"/><path d="M389.500 125.200 H398.500 V126.200 H389.500 Z M392.300 128.500 H393.300 V134.500 H392.300 Z M394.700 128.500 H395.700 V134.500 H394.700 Z" fill="#d4d4d4"/></g>
  <use href="#sk1" x="26.500"/>
  <use href="#sk1" x="49" y="0.500"/>
  <use href="#sk1" x="75" y="0.500"/>
  <use href="#sk1" x="101" y="1.500"/>
  <use href="#sk1" x="128" y="1.500"/>
 </g>
 <g class="dis" stroke="#cbcbcb">
  <path d="M388.500 132 Q383 127 385.800 121.500"/>
  <path d="M414.500 118.800 Q409.500 125 412.200 131"/>
  <path d="M436.500 125 Q432.500 131 443 131.800 Q452.500 131.300 450.800 125.500"/>
  <path d="M475.300 125 Q479.300 131 468.800 131.800 Q459.300 131.300 461 125.500"/>
  <path d="M502.300 124 Q501.300 117.600 495 117.600 Q489.500 117.600 488.300 122"/>
  <path d="M514.500 124 Q515.500 117.600 521.800 117.600 Q527.300 117.600 528.500 122"/>
 </g>
 <g fill="#c9c9c9" stroke="none">
  <path d="M382.800 122.300 L388.300 122.800 L387 118.200 Z"/>
  <path d="M409.600 129.800 L414.800 130.300 L412.500 134.300 Z"/>
  <path d="M434.200 126.300 L439 126 L437.300 121.800 Z"/>
  <path d="M477.600 126.300 L472.800 126 L474.500 121.800 Z"/>
  <path d="M486.200 121.500 L491 122.300 L488 125.800 Z"/>
  <path d="M530.600 121.500 L525.800 122.300 L528.800 125.800 Z"/>
 </g>
 <g fill="none" stroke="#dedede" stroke-width="1"><path d="M570.500 121 L575.500 126 L570.500 131 Z M577.500 121 L582.500 126 L577.500 131 Z M584.500 121 L589.500 126 L584.500 131 Z"/></g>
 <!-- new page (toolbar) -->
 <use href="#newpg" x="565" y="36"/>
 <!-- delete page disabled -->
 <g stroke="#c2c2c2" stroke-width="1" fill="none">
  <rect x="652.500" y="121.500" width="11" height="10"/><path d="M651 119.500 L665 133.500 M665 119.500 L651 133.500"/><path d="M655 124.500 H661 M655 128.500 H661"/>
 </g>
 <!-- nav arrows -->
 <g fill="#c0c0c0">
  <rect x="753.500" y="121.500" width="1.500" height="10"/><path d="M761 121.500 V131.500 L755.500 126.500 Z"/>
  <path d="M786 121.500 V131.500 L780 126.500 Z"/>
  <path d="M807 121.500 V131.500 L813 126.500 Z"/>
  <path d="M832 121.500 V131.500 L837.500 126.500 Z"/><rect x="838" y="121.500" width="1.500" height="10"/>
 </g>
</svg>


<!-- CANVAS -->
<div id="canvas" class="a">

<div class="a" style="left:17px;top:0;width:0;height:470px;border-left:1px dotted #2c5030;"></div>
<div class="a" style="left:642px;top:0;width:0;height:470px;border-left:1px dotted #2c5030;"></div>
<div class="a" style="left:96px;top:0;width:1px;height:470px;background:#1b1b7e;"></div>
<div class="a" style="left:565px;top:0;width:1px;height:470px;background:#1b1b7e;"></div>
<div class="a" style="left:114px;top:-40px;width:424px;height:140px;border:solid #000;border-width:4px 5px 4px 4px;"></div>
<div class="a" style="left:114px;top:127px;width:424px;height:280px;border:solid #000;border-width:4px 5px 4px 4px;"></div>
<div class="a" style="left:114px;top:434px;width:424px;height:280px;border:solid #000;border-width:4px 5px 4px 4px;"></div>
<div class="a" style="left:114px;top:108px;width:1px;height:19px;background:repeating-linear-gradient(to bottom,#a8182f 0,#a8182f 3px,transparent 3px,transparent 4px);"></div>
<div class="a" style="left:546px;top:108px;width:1px;height:19px;background:repeating-linear-gradient(to bottom,#a8182f 0,#a8182f 3px,transparent 3px,transparent 4px);"></div>
<div class="a" style="left:114px;top:415px;width:1px;height:19px;background:repeating-linear-gradient(to bottom,#a8182f 0,#a8182f 3px,transparent 3px,transparent 4px);"></div>
<div class="a" style="left:546px;top:415px;width:1px;height:19px;background:repeating-linear-gradient(to bottom,#a8182f 0,#a8182f 3px,transparent 3px,transparent 4px);"></div>
<div class="a" style="left:662px;top:0;width:16px;height:470px;background:#f0f0f0;"></div>
<div class="a" style="left:662px;top:133px;width:15px;height:130px;background:#cdcdcd;"></div>
<svg style="left:666px;top:6px;" width="8" height="6" viewBox="0 0 8 6"><path d="M0.7 5 L4 1.5 L7.3 5" stroke="#505050" stroke-width="1.8" fill="none"/></svg>
<svg style="left:666px;top:458px;" width="8" height="6" viewBox="0 0 8 6"><path d="M0.7 1 L4 4.5 L7.3 1" stroke="#505050" stroke-width="1.8" fill="none"/></svg>
<!--CANVASCONTENT-->
</div>

<!-- RIGHT PANEL -->
<div id="right" class="a"></div>

<div class="a hdr" style="left:857px;top:56px;width:163px;height:21px;"></div>
<div class="t hdrt" id="h_props" style="left:865px;top:60px;">Layer Properties</div>
<div class="a" style="left:863px;top:79px;width:148px;height:20px;background:#ededed;border:1px solid #a8a8a8;"></div>
<div class="a" style="left:857px;top:335px;width:163px;height:1px;background:#4a5a1a;"></div>
<div class="a hdr" style="left:857px;top:336px;width:163px;height:21px;"></div>
<div class="t hdrt" id="h_layers" style="left:865px;top:340px;">Layer List</div>
<div class="a" style="left:1019px;top:77px;width:1px;height:258px;background:#d4ec7a;"></div>
<div class="a" style="left:1019px;top:357px;width:1px;height:32px;background:#d4ec7a;"></div>
<div class="a" style="left:1003px;top:389px;width:17px;height:224px;background:#f0f0f0;"></div>
<div class="a" style="left:857px;top:389px;width:145px;height:24px;background:#fff;border-top:1px solid #a6a6a6;box-sizing:border-box;"></div>
<div class="t lay" style="left:897px;top:394px;">Panel 1</div>
<div class="a" style="left:857px;top:413px;width:145px;height:24px;background:#fff;border-top:1px solid #a6a6a6;box-sizing:border-box;"></div>
<div class="t lay" style="left:897px;top:418px;">Panel 2</div>
<div class="a" style="left:857px;top:437px;width:145px;height:24px;background:#fff;border-top:1px solid #a6a6a6;box-sizing:border-box;"></div>
<div class="t lay" style="left:897px;top:442px;">Panel 3</div>
<div class="a" style="left:857px;top:461px;width:145px;height:24px;background:#fff;border-top:1px solid #a6a6a6;box-sizing:border-box;"></div>
<div class="t lay" style="left:897px;top:466px;">Panel 4</div>
<div class="a" style="left:857px;top:485px;width:145px;height:24px;background:#fff;border-top:1px solid #a6a6a6;box-sizing:border-box;"></div>
<div class="t lay" style="left:897px;top:490px;">Panel 5</div>

<svg style="left:0;top:0;" width="1033" height="648" viewBox="0 0 1033 648">
 <!-- layer toolbar (disabled) -->
 <g fill="#cfcfb4" stroke="none">
  <path d="M870.500 365 H874.500 V370 H877.500 L872.500 375 L867.500 370 H870.500 Z"/><rect x="867" y="376.500" width="11" height="1"/>
  <path d="M948.500 377 H952.500 V372.500 H955.500 L950.500 367.500 L945.500 372.500 H948.500 Z"/><rect x="945" y="365.500" width="11" height="1"/>
 </g>
 <g fill="none" stroke="#cfcfb4" stroke-width="1">
  <path d="M896.500 366.500 H900.500 V371 H903 L898.500 376 L894 371 H896.500 Z"/>
  <path d="M922.500 376 H926.500 V371.500 H929 L924.500 366.500 L920 371.500 H922.500 Z"/>
  <path d="M995.500 365.500 H1010 V367.500 H995.500 Z M1001 365.500 V363 H1004.500 V365.500 M996.800 367.500 L998 379.500 H1007.500 L1008.700 367.500 M1000.500 370 L1001 377.500 M1005 370 L1004.500 377.500" stroke="#d6d6bc"/>
 </g>
 <path d="M1008 403 L1011.500 399.500 L1015 403" stroke="#b4b4b4" stroke-width="1.600" fill="none"/>
 <path d="M1008 602 L1011.500 605.500 L1015 602" stroke="#b4b4b4" stroke-width="1.600" fill="none"/>
 <g id="layic">
  <rect x="874.600" y="392.600" width="16.800" height="16.800" fill="#fff" stroke="#000" stroke-width="1.200"/>
  <circle cx="880.500" cy="401" r="4" fill="#fff" stroke="#444" stroke-width="0.900"/>
  <path d="M876.500 399 Q878 395.500 883.500 396" stroke="#444" stroke-width="1.200" fill="none"/>
  <path d="M877 409 Q878 405.500 880.500 405.500 Q883.500 405.500 884.500 409" stroke="#444" stroke-width="0.900" fill="none"/>
  <circle cx="879" cy="400.300" r="0.550" fill="#222"/><circle cx="882" cy="400.300" r="0.550" fill="#222"/>
  <path d="M879 402.500 Q880.500 403.800 882 402.500" stroke="#444" stroke-width="0.700" fill="none"/>
  <path d="M886.500 393 V400 Q888 401 887.500 402.500 L886 404.500 L889 403.500 L891 405" stroke="#555" stroke-width="0.800" fill="none"/>
  <path d="M889 394.500 V398.500 M889 400 V400.800" stroke="#555" stroke-width="0.900"/>
 </g>
 <use href="#layic" y="24"/><use href="#layic" y="48"/><use href="#layic" y="72"/><use href="#layic" y="96"/>
</svg>


<!-- frame lines -->
<div class="a" style="left:177px;top:56px;width:1px;height:557px;background:#4d5a1c;"></div>
<div class="a" style="left:856px;top:56px;width:1px;height:557px;background:#444;"></div>
<div class="a" style="left:178px;top:142px;width:678px;height:1px;background:#444;"></div>

<!-- STATUS BAR -->
<div id="status" class="a"></div>

<div class="a" style="left:12px;top:613px;width:1008px;height:1px;background:#e2e2e2;"></div>
<div class="a" style="left:479px;top:615px;width:1px;height:20px;background:#d0d0d0;"></div>
<div class="a" style="left:599px;top:615px;width:1px;height:20px;background:#d0d0d0;"></div>
<div class="a" style="left:719px;top:615px;width:1px;height:20px;background:#d0d0d0;"></div>
<div class="a" style="left:842px;top:615px;width:160px;height:19px;background:#e6e6e6;border:1px solid #b4b4b4;"></div>
<svg style="left:1007px;top:623px;" width="12" height="12" viewBox="0 0 12 12"><g fill="#a8b4c0"><rect x="9" y="1" width="2" height="2"/><rect x="6" y="4" width="2" height="2"/><rect x="9" y="4" width="2" height="2"/><rect x="3" y="7" width="2" height="2"/><rect x="6" y="7" width="2" height="2"/><rect x="9" y="7" width="2" height="2"/></g></svg>

</body>
</html>
